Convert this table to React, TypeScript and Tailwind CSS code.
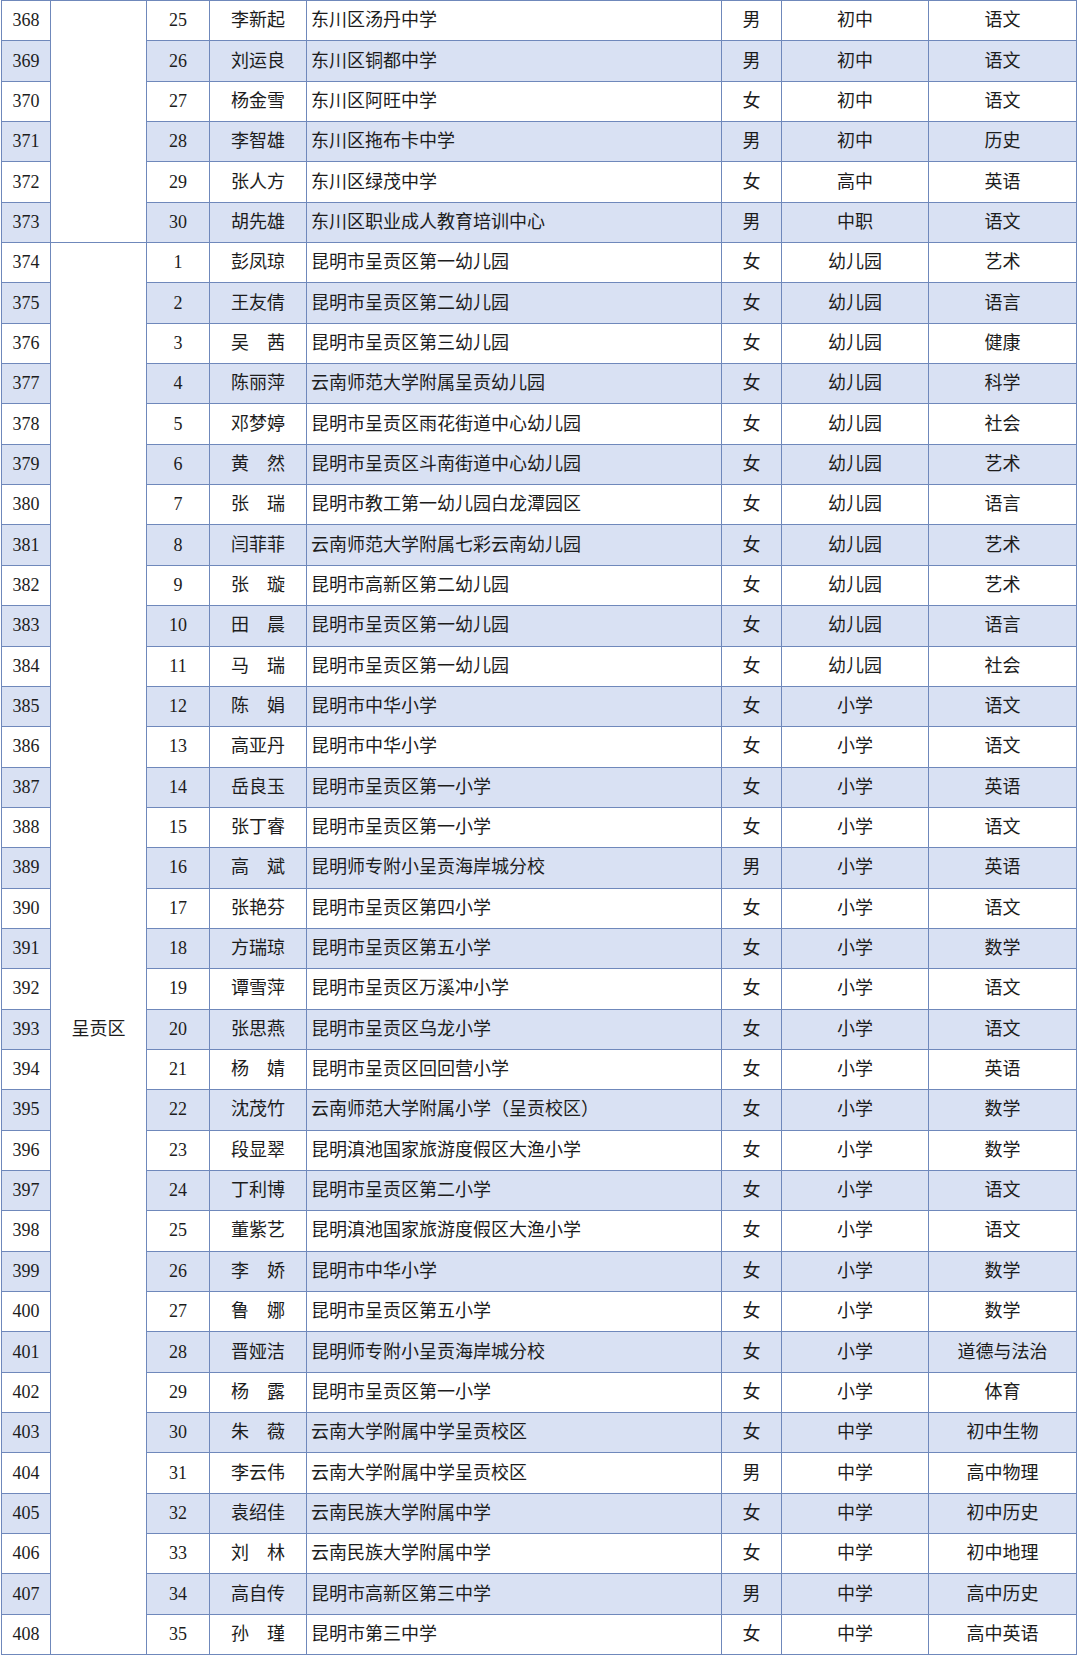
const rows: [number, number, string, string, string, string, string][] = [
  [368, 25, '李新起', '东川区汤丹中学', '男', '初中', '语文'],
  [369, 26, '刘运良', '东川区铜都中学', '男', '初中', '语文'],
  [370, 27, '杨金雪', '东川区阿旺中学', '女', '初中', '语文'],
  [371, 28, '李智雄', '东川区拖布卡中学', '男', '初中', '历史'],
  [372, 29, '张人方', '东川区绿茂中学', '女', '高中', '英语'],
  [373, 30, '胡先雄', '东川区职业成人教育培训中心', '男', '中职', '语文'],
  [374, 1, '彭凤琼', '昆明市呈贡区第一幼儿园', '女', '幼儿园', '艺术'],
  [375, 2, '王友倩', '昆明市呈贡区第二幼儿园', '女', '幼儿园', '语言'],
  [376, 3, '吴　茜', '昆明市呈贡区第三幼儿园', '女', '幼儿园', '健康'],
  [377, 4, '陈丽萍', '云南师范大学附属呈贡幼儿园', '女', '幼儿园', '科学'],
  [378, 5, '邓梦婷', '昆明市呈贡区雨花街道中心幼儿园', '女', '幼儿园', '社会'],
  [379, 6, '黄　然', '昆明市呈贡区斗南街道中心幼儿园', '女', '幼儿园', '艺术'],
  [380, 7, '张　瑞', '昆明市教工第一幼儿园白龙潭园区', '女', '幼儿园', '语言'],
  [381, 8, '闫菲菲', '云南师范大学附属七彩云南幼儿园', '女', '幼儿园', '艺术'],
  [382, 9, '张　璇', '昆明市高新区第二幼儿园', '女', '幼儿园', '艺术'],
  [383, 10, '田　晨', '昆明市呈贡区第一幼儿园', '女', '幼儿园', '语言'],
  [384, 11, '马　瑞', '昆明市呈贡区第一幼儿园', '女', '幼儿园', '社会'],
  [385, 12, '陈　娟', '昆明市中华小学', '女', '小学', '语文'],
  [386, 13, '高亚丹', '昆明市中华小学', '女', '小学', '语文'],
  [387, 14, '岳良玉', '昆明市呈贡区第一小学', '女', '小学', '英语'],
  [388, 15, '张丁睿', '昆明市呈贡区第一小学', '女', '小学', '语文'],
  [389, 16, '高　斌', '昆明师专附小呈贡海岸城分校', '男', '小学', '英语'],
  [390, 17, '张艳芬', '昆明市呈贡区第四小学', '女', '小学', '语文'],
  [391, 18, '方瑞琼', '昆明市呈贡区第五小学', '女', '小学', '数学'],
  [392, 19, '谭雪萍', '昆明市呈贡区万溪冲小学', '女', '小学', '语文'],
  [393, 20, '张思燕', '昆明市呈贡区乌龙小学', '女', '小学', '语文'],
  [394, 21, '杨　婧', '昆明市呈贡区回回营小学', '女', '小学', '英语'],
  [395, 22, '沈茂竹', '云南师范大学附属小学（呈贡校区）', '女', '小学', '数学'],
  [396, 23, '段显翠', '昆明滇池国家旅游度假区大渔小学', '女', '小学', '数学'],
  [397, 24, '丁利博', '昆明市呈贡区第二小学', '女', '小学', '语文'],
  [398, 25, '董紫艺', '昆明滇池国家旅游度假区大渔小学', '女', '小学', '语文'],
  [399, 26, '李　娇', '昆明市中华小学', '女', '小学', '数学'],
  [400, 27, '鲁　娜', '昆明市呈贡区第五小学', '女', '小学', '数学'],
  [401, 28, '晋娅洁', '昆明师专附小呈贡海岸城分校', '女', '小学', '道德与法治'],
  [402, 29, '杨　露', '昆明市呈贡区第一小学', '女', '小学', '体育'],
  [403, 30, '朱　薇', '云南大学附属中学呈贡校区', '女', '中学', '初中生物'],
  [404, 31, '李云伟', '云南大学附属中学呈贡校区', '男', '中学', '高中物理'],
  [405, 32, '袁绍佳', '云南民族大学附属中学', '女', '中学', '初中历史'],
  [406, 33, '刘　林', '云南民族大学附属中学', '女', '中学', '初中地理'],
  [407, 34, '高自传', '昆明市高新区第三中学', '男', '中学', '高中历史'],
  [408, 35, '孙　瑾', '昆明市第三中学', '女', '中学', '高中英语'],
];

const cell = 'flex items-center justify-center border-r border-b border-[#6f88bb]';

export default function App(): React.ReactElement {
  return (
    <div className="w-[1080px] h-[1655px] bg-white font-['Liberation_Serif','Noto_Sans_CJK_SC',serif] text-[18px] text-[#1c1c1c]">
      <div className="ml-[1px] w-[1076px] h-[1655px] flex flex-col border-l border-t border-[#6f88bb]">
        {rows.map(([no, seq, name, school, sex, level, subject]) => {
          const shaded = no % 2 === 1 ? 'bg-[#d9e1f3]' : 'bg-white';
          const groupEnd = no === 373 || no === 408;
          return (
            <div key={no} className="flex-1 grid grid-cols-[49px_96px_63px_97px_415px_60px_147px_148px]">
              <div className={`${cell} ${shaded}`}>{no}</div>
              <div
                className={`flex items-center justify-center bg-white border-r border-[#6f88bb] ${groupEnd ? 'border-b' : ''}`}
              >
                {no === 393 ? '呈贡区' : ''}
              </div>
              <div className={`${cell} ${shaded}`}>{seq}</div>
              <div className={`${cell} ${shaded} whitespace-pre`}>{name}</div>
              <div className={`flex items-center pl-[4px] border-r border-b border-[#6f88bb] ${shaded} whitespace-nowrap`}>
                {school}
              </div>
              <div className={`${cell} ${shaded}`}>{sex}</div>
              <div className={`${cell} ${shaded}`}>{level}</div>
              <div className={`${cell} ${shaded}`}>{subject}</div>
            </div>
          );
        })}
      </div>
    </div>
  );
}
